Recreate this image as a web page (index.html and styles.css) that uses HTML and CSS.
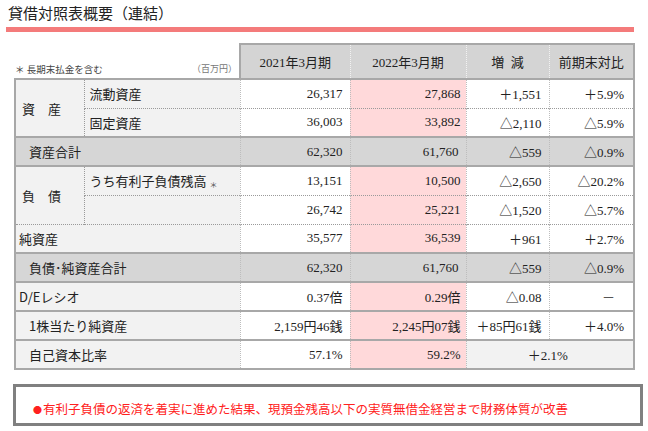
FILE: index.html
```html
<!DOCTYPE html>
<html lang="ja">
<head>
<meta charset="utf-8">
<title>貸借対照表概要（連結）</title>
<link rel="stylesheet" href="styles.css">
</head>
<body>
<h1 class="title">貸借対照表概要（連結）</h1>
<div class="bar"></div>
<table class="bs">
  <colgroup>
    <col class="c1"><col class="c2"><col class="c3"><col class="c4"><col class="c5"><col class="c6">
  </colgroup>
  <thead>
    <tr class="head">
      <th colspan="2" class="notes">
        <div class="notes-in"><span>＊ 長期末払金を含む</span><span class="unit">（百万円）</span></div>
      </th>
      <th class="h">2021年3月期</th>
      <th class="h">2022年3月期</th>
      <th class="h">増&ensp;減</th>
      <th class="h last">前期末対比</th>
    </tr>
  </thead>
  <tbody>
    <tr class="r">
      <td rowspan="2" class="grp">資　産</td>
      <td class="sub">流動資産</td>
      <td class="n">26,317</td><td class="n pk">27,868</td><td class="n">＋1,551</td><td class="n l">＋5.9%</td>
    </tr>
    <tr class="r dot">
      <td class="sub">固定資産</td>
      <td class="n">36,003</td><td class="n pk">33,892</td><td class="n">△2,110</td><td class="n l">△5.9%</td>
    </tr>
    <tr class="r tot">
      <td colspan="2" class="lab in">資産合計</td>
      <td class="n">62,320</td><td class="n">61,760</td><td class="n">△559</td><td class="n l">△0.9%</td>
    </tr>
    <tr class="r">
      <td rowspan="2" class="grp">負　債</td>
      <td class="sub">うち有利子負債残高 <span class="ast">＊</span></td>
      <td class="n">13,151</td><td class="n pk">10,500</td><td class="n">△2,650</td><td class="n l">△20.2%</td>
    </tr>
    <tr class="r dot">
      <td class="sub"></td>
      <td class="n">26,742</td><td class="n pk">25,221</td><td class="n">△1,520</td><td class="n l">△5.7%</td>
    </tr>
    <tr class="r dot">
      <td colspan="2" class="lab">純資産</td>
      <td class="n">35,577</td><td class="n pk">36,539</td><td class="n">＋961</td><td class="n l">＋2.7%</td>
    </tr>
    <tr class="r tot">
      <td colspan="2" class="lab in">負債･純資産合計</td>
      <td class="n">62,320</td><td class="n">61,760</td><td class="n">△559</td><td class="n l">△0.9%</td>
    </tr>
    <tr class="r">
      <td colspan="2" class="lab">D/Eレシオ</td>
      <td class="n">0.37倍</td><td class="n pk">0.29倍</td><td class="n">△0.08</td><td class="n l dash">－</td>
    </tr>
    <tr class="r">
      <td colspan="2" class="lab in">1株当たり純資産</td>
      <td class="n">2,159円46銭</td><td class="n pk">2,245円07銭</td><td class="n">＋85円61銭</td><td class="n l">＋4.0%</td>
    </tr>
    <tr class="r">
      <td colspan="2" class="lab in">自己資本比率</td>
      <td class="n">57.1%</td><td class="n pk">59.2%</td><td colspan="2" class="merged">＋2.1%</td>
    </tr>
  </tbody>
</table>
<div class="box">
  <p class="point"><span class="dotmark">●</span>有利子負債の返済を着実に進めた結果、現預金残高以下の実質無借金経営まで財務体質が改善</p>
</div>
</body>
</html>
```

FILE: styles.css
```css
html, body {
  margin: 0;
  padding: 0;
  background: #ffffff;
}
body {
  width: 648px;
  height: 431px;
  overflow: hidden;
  font-family: "Liberation Serif", "Noto Sans CJK JP", serif;
  color: #222222;
}
.title {
  margin: 0;
  padding: 4px 0 0 8px;
  height: 23px;
  font-family: "Noto Sans CJK JP", sans-serif;
  font-weight: 400;
  font-size: 15px;
  line-height: 18px;
  color: #222;
}
.bar {
  margin-left: 6px;
  width: 628px;
  height: 5px;
  background: #f47b7b;
}
.bs {
  margin: 11px 0 0 14px;
  border-collapse: collapse;
  table-layout: fixed;
  width: 619px;
  font-size: 13px;
}
.c1 { width: 69px; }
.c2 { width: 156px; }
.c3 { width: 110px; }
.c4 { width: 116px; }
.c5 { width: 83px; }
.c6 { width: 85px; }

.head { height: 35px; }
.notes {
  padding: 0 2px 3px 0;
  vertical-align: bottom;
  font-weight: 400;
  border: none;
  border-bottom: 2px solid #a8a8a8;
}
.notes-in {
  display: flex;
  justify-content: space-between;
  font-family: "Noto Sans CJK JP", sans-serif;
  font-size: 9.5px;
  line-height: 12px;
  color: #444;
}
.unit { color: #777; font-size: 9px; }
.h {
  background: #d4d4d4;
  font-weight: 400;
  text-align: center;
  border-top: 2px solid #a8a8a8;
  border-bottom: 2px solid #a8a8a8;
  border-left: 1px dotted #f2f2f2;
  padding: 0;
  color: #222;
}
.h:nth-child(2) { border-left: 2px solid #a8a8a8; }
.h.last { border-right: 2px solid #a8a8a8; }

.r { height: 29px; }
.r td {
  padding: 0;
  border-top: 2px solid #a8a8a8;
  border-left: 1px dotted #bdbdbd;
}
.r.dot td { border-top: 1px dotted #9a9a9a; }
.r td:first-child { border-left: 2px solid #a8a8a8; }
.r td.l, .r td.merged { border-right: 2px solid #a8a8a8; }
tbody tr:last-child td { border-bottom: 2px solid #a8a8a8; }

.grp {
  background: #f2f2f2;
  padding-left: 6px !important;
  font-family: "Noto Sans CJK JP", sans-serif;
  vertical-align: middle;
}
.sub {
  background: #f2f2f2;
  padding-left: 5px !important;
  font-family: "Noto Sans CJK JP", sans-serif;
  border-left: 1px dotted #9a9a9a !important;
}
.r.dot .sub { border-top: 1px dotted #9a9a9a; }
.ast {
  font-size: 8px;
  color: #555;
  vertical-align: -2px;
}
.lab {
  background: #f2f2f2;
  padding-left: 3px !important;
  font-family: "Noto Sans CJK JP", sans-serif;
}
.lab.in { padding-left: 13px !important; }
.n {
  text-align: right;
  padding-right: 7px !important;
  background: #ffffff;
  white-space: nowrap;
}
.n.l { padding-right: 9px !important; }
.n.dash { padding-right: 18px !important; color: #555; }
.pk { background: #ffd9da; padding-right: 5px !important; }
.tot td { background: #d6d6d6; }
.tot td.n { background: #d6d6d6; }
.merged {
  background: #f2f2f2;
  text-align: center;
  padding-right: 4px !important;
}

.box {
  margin: 14px 0 0 13px;
  width: 624px;
  height: 36px;
  border: 3px solid #808080;
  background: #ffffff;
  display: flex;
  align-items: center;
}
.point {
  margin: 8px 0 0 17px;
  font-family: "Noto Sans CJK JP", sans-serif;
  font-size: 12.5px;
  line-height: 16px;
  color: #ff2020;
}
.dotmark {
  font-size: 9px;
  margin-right: 1px;
  vertical-align: 1px;
}
```
